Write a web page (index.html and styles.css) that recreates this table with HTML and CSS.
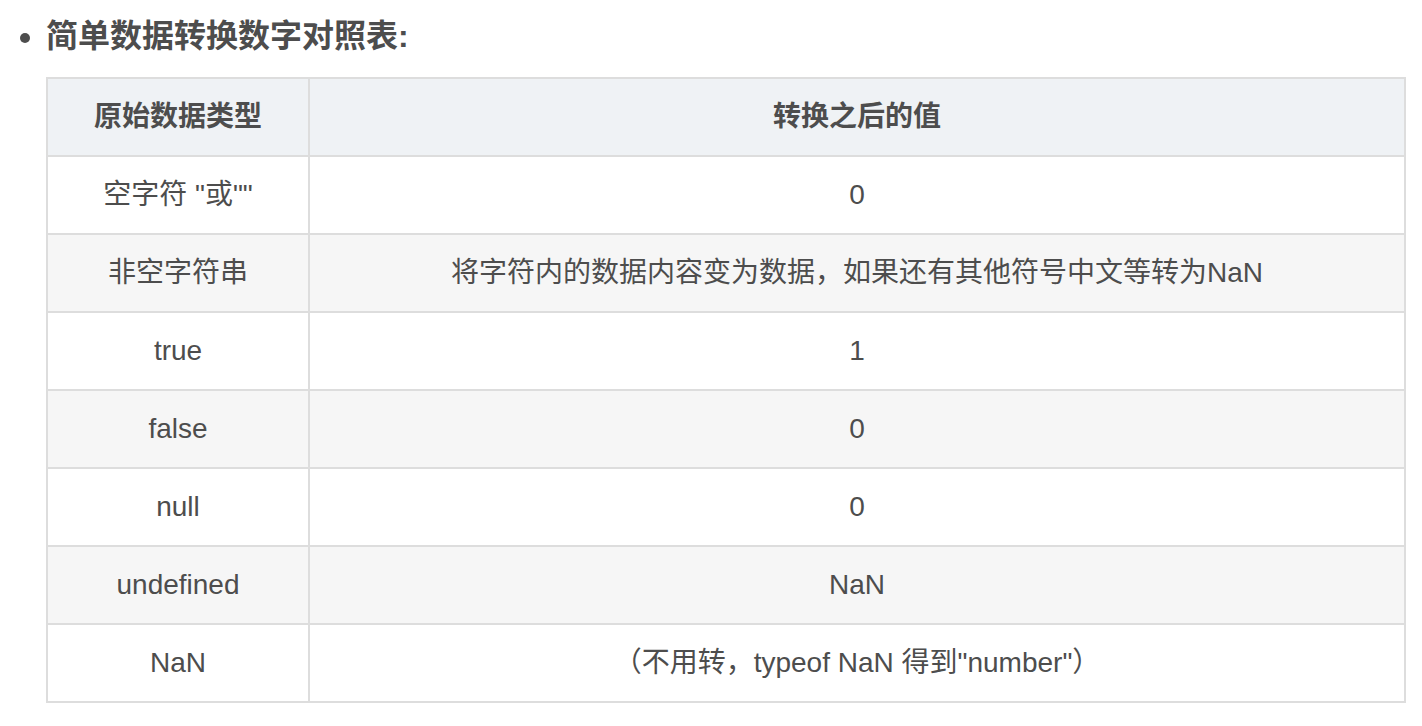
FILE: index.html
```html
<!DOCTYPE html>
<html lang="zh-CN">
<head>
<meta charset="utf-8">
<title>简单数据转换数字对照表</title>
<link rel="stylesheet" href="styles.css">
</head>
<body>
<ul class="list">
  <li class="item">
    <strong class="title">简单数据转换数字对照表:</strong>
    <table class="conv">
      <thead>
        <tr><th class="c1">原始数据类型</th><th class="c2">转换之后的值</th></tr>
      </thead>
      <tbody>
        <tr><td class="c1">空字符 "或""</td><td class="c2">0</td></tr>
        <tr><td class="c1">非空字符串</td><td class="c2">将字符内的数据内容变为数据，如果还有其他符号中文等转为NaN</td></tr>
        <tr><td class="c1">true</td><td class="c2">1</td></tr>
        <tr><td class="c1">false</td><td class="c2">0</td></tr>
        <tr><td class="c1">null</td><td class="c2">0</td></tr>
        <tr><td class="c1">undefined</td><td class="c2">NaN</td></tr>
        <tr><td class="c1">NaN</td><td class="c2">（不用转，typeof NaN 得到"number"）</td></tr>
      </tbody>
    </table>
  </li>
</ul>
</body>
</html>
```
FILE: styles.css
```css
html, body {
  margin: 0;
  padding: 0;
  background: #ffffff;
}
body {
  font-family: "Liberation Sans", "Noto Sans CJK SC", Arial, sans-serif;
  color: #4d4d4d;
}
.list {
  margin: 0;
  padding: 13px 0 0 46px;
}
.item {
  font-size: 32px;
  line-height: 47px;
}
.title {
  font-weight: bold;
  color: #4d4d4d;
}
.conv {
  margin-top: 17px;
  border-collapse: separate;
  border-spacing: 0;
  border-top: 2px solid #dddddd;
  border-left: 2px solid #dddddd;
  width: 1360px;
  table-layout: fixed;
  font-size: 28px;
  line-height: 36px;
}
.conv th, .conv td {
  border-right: 2px solid #dddddd;
  border-bottom: 2px solid #dddddd;
  height: 78px;
  padding: 0 10px;
  text-align: center;
  vertical-align: middle;
  box-sizing: border-box;
}
.conv th {
  background: #eff2f5;
  font-weight: bold;
}
.conv .c1 {
  width: 262px;
}
.conv tbody tr:nth-child(even) td {
  background: #f6f6f6;
}
```
